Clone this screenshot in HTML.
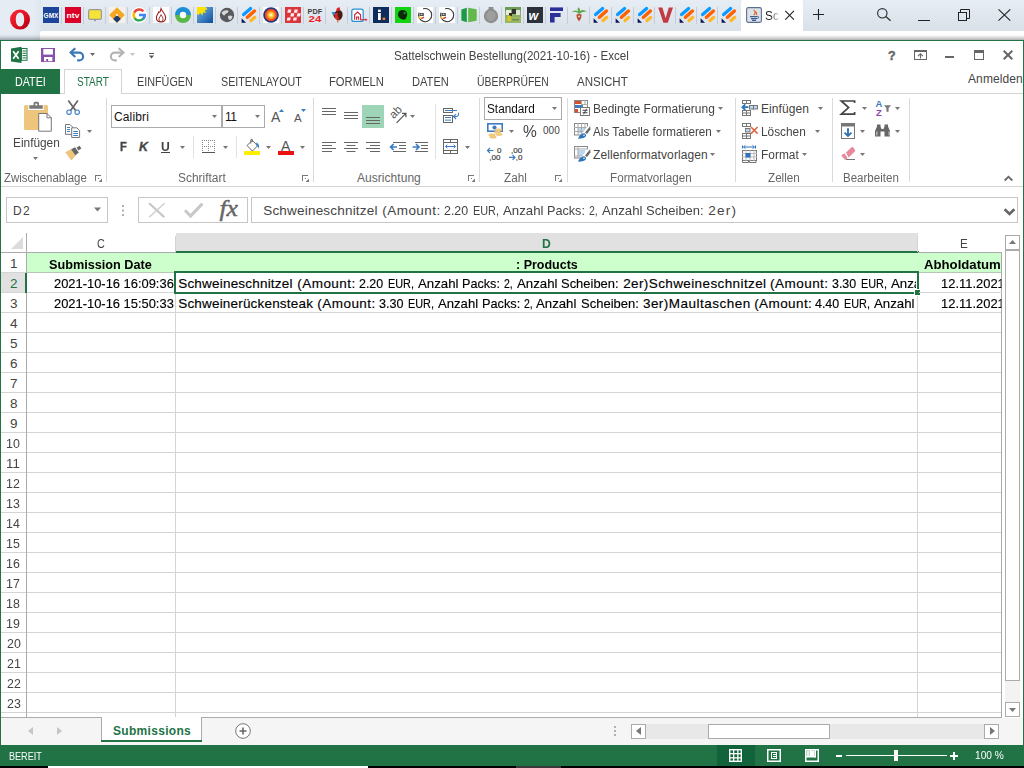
<!DOCTYPE html>
<html lang="de"><head><meta charset="utf-8"><title>Sattelschwein Bestellung(2021-10-16) - Excel</title>
<style>
html,body{margin:0;padding:0;background:#fff;}
body{width:1024px;height:768px;overflow:hidden;position:relative;font-family:"Liberation Sans",sans-serif;}
#r{position:absolute;left:0;top:0;width:1024px;height:768px;overflow:hidden;}
#r div,#r svg,#r span{position:absolute;box-sizing:content-box;}
#r span{white-space:pre;line-height:20px;font-family:"Liberation Sans",sans-serif;}
</style></head>
<body><div id="r">
<div style="left:0px;top:0px;width:1024px;height:31px;background:linear-gradient(#e6edf5,#d9e0e8);"></div>
<div style="left:0px;top:0px;width:41px;height:40px;background:linear-gradient(90deg,#e5ecf4 80%,#dfe6ee);"></div>
<div style="left:40px;top:31px;width:984px;height:9px;background:#fff;border-radius:3px 0 0 0;"></div>
<div style="left:0px;top:34px;width:1024px;height:6px;background:linear-gradient(rgba(0,0,0,0),rgba(0,0,0,0.04) 30%,rgba(0,0,0,0.30));"></div>
<div style="left:741px;top:0px;width:62px;height:32px;background:#fff;border-radius:2px 2px 0 0;"></div>
<div style="left:0px;top:40px;width:1024px;height:728px;background:#217346;"></div>
<div style="left:1px;top:41px;width:1022px;height:704px;background:#fff;"></div>
<span style="left:394px;top:46px;font-size:12px;color:#444;transform:scaleX(0.9671);transform-origin:0 0;">Sattelschwein Bestellung(2021-10-16) - Excel</span>
<div style="left:1px;top:69px;width:59px;height:25px;background:#217346;"></div>
<div style="left:60px;top:93px;width:963px;height:1px;background:#d4d4d4;"></div>
<div style="left:64px;top:69px;width:56px;height:24px;border:1px solid #d4d4d4;background:#fff;border-bottom:none;height:24px;"></div>
<div style="left:65px;top:93px;width:56px;height:1px;background:#fff;"></div>
<span style="left:15px;top:72px;font-size:12px;color:#fff;transform:scaleX(0.8940);transform-origin:0 0;">DATEI</span>
<span style="left:77px;top:72px;font-size:12px;color:#217346;transform:scaleX(0.8317);transform-origin:0 0;">START</span>
<span style="left:137px;top:72px;font-size:12px;color:#444;transform:scaleX(0.8998);transform-origin:0 0;">EINFÜGEN</span>
<span style="left:221px;top:72px;font-size:12px;color:#444;transform:scaleX(0.8931);transform-origin:0 0;">SEITENLAYOUT</span>
<span style="left:329px;top:72px;font-size:12px;color:#444;transform:scaleX(0.9340);transform-origin:0 0;">FORMELN</span>
<span style="left:412px;top:72px;font-size:12px;color:#444;transform:scaleX(0.9251);transform-origin:0 0;">DATEN</span>
<span style="left:477px;top:72px;font-size:12px;color:#444;transform:scaleX(0.8683);transform-origin:0 0;">ÜBERPRÜFEN</span>
<span style="left:577px;top:72px;font-size:12px;color:#444;transform:scaleX(0.9645);transform-origin:0 0;">ANSICHT</span>
<span style="left:968px;top:69px;font-size:12px;color:#444;letter-spacing:0.108px;">Anmelden</span>
<div style="left:1px;top:186px;width:1022px;height:1px;background:#d4d4d4;"></div>
<div style="left:106px;top:98px;width:1px;height:84px;background:#dadada;"></div>
<div style="left:313px;top:98px;width:1px;height:84px;background:#dadada;"></div>
<div style="left:479px;top:98px;width:1px;height:84px;background:#dadada;"></div>
<div style="left:567px;top:98px;width:1px;height:84px;background:#dadada;"></div>
<div style="left:735px;top:98px;width:1px;height:84px;background:#dadada;"></div>
<div style="left:832px;top:98px;width:1px;height:84px;background:#dadada;"></div>
<div style="left:909px;top:98px;width:1px;height:84px;background:#dadada;"></div>
<div style="left:435px;top:104px;width:1px;height:55px;background:#e1e1e1;"></div>
<div style="left:193px;top:136px;width:1px;height:22px;background:#e1e1e1;"></div>
<div style="left:236px;top:136px;width:1px;height:22px;background:#e1e1e1;"></div>
<span style="left:4px;top:168px;font-size:12px;color:#666;transform:scaleX(0.9548);transform-origin:0 0;">Zwischenablage</span>
<span style="left:178px;top:168px;font-size:12px;color:#666;transform:scaleX(0.9955);transform-origin:0 0;">Schriftart</span>
<span style="left:357px;top:168px;font-size:12px;color:#666;letter-spacing:0.042px;">Ausrichtung</span>
<span style="left:504px;top:168px;font-size:12px;color:#666;transform:scaleX(0.9767);transform-origin:0 0;">Zahl</span>
<span style="left:610px;top:168px;font-size:12px;color:#666;transform:scaleX(0.9733);transform-origin:0 0;">Formatvorlagen</span>
<span style="left:768px;top:168px;font-size:12px;color:#666;transform:scaleX(0.9728);transform-origin:0 0;">Zellen</span>
<span style="left:843px;top:168px;font-size:12px;color:#666;transform:scaleX(0.9613);transform-origin:0 0;">Bearbeiten</span>
<span style="left:12.5px;top:133px;font-size:12px;color:#444;transform:scaleX(0.9879);transform-origin:0 0;">Einfügen</span>
<div style="left:111px;top:105px;width:109px;height:21px;border:1px solid #ababab;background:#fff;"></div>
<div style="left:222px;top:105px;width:41px;height:21px;border:1px solid #ababab;background:#fff;"></div>
<span style="left:114px;top:107px;font-size:12px;color:#111;letter-spacing:0.131px;">Calibri</span>
<span style="left:225px;top:107px;font-size:12px;color:#111;letter-spacing:-0.6px;">11</span>
<span style="left:120px;top:137px;font-size:12.5px;color:#444;font-weight:700;transform:scaleX(0.8900);transform-origin:0 0;-webkit-text-stroke:0.35px #444;">F</span>
<span style="left:139px;top:137px;font-size:12.5px;color:#444;font-weight:700;font-style:italic;letter-spacing:0.769px;-webkit-text-stroke:0.3px #444;">K</span>
<span style="left:161px;top:137px;font-size:12.5px;color:#444;font-weight:700;transform:scaleX(0.9744);transform-origin:0 0;">U</span>
<div style="left:161px;top:152px;width:9px;height:1px;background:#444;"></div>
<div style="left:484px;top:97px;width:76px;height:21px;border:1px solid #ababab;background:#fff;"></div>
<span style="left:487px;top:99px;font-size:12px;color:#111;transform:scaleX(0.9815);transform-origin:0 0;">Standard</span>
<span style="left:523px;top:122px;font-size:16px;color:#444;transform:scaleX(0.9695);transform-origin:0 0;">%</span>
<span style="left:543px;top:121px;font-size:10px;color:#444;letter-spacing:0.056px;">000</span>
<span style="left:593px;top:99px;font-size:12px;color:#444;transform:scaleX(0.9977);transform-origin:0 0;">Bedingte Formatierung</span>
<span style="left:593px;top:122px;font-size:12px;color:#444;transform:scaleX(0.9750);transform-origin:0 0;">Als Tabelle formatieren</span>
<span style="left:593px;top:145px;font-size:12px;color:#444;letter-spacing:0.109px;">Zellenformatvorlagen</span>
<span style="left:761px;top:99px;font-size:12px;color:#444;letter-spacing:0.061px;">Einfügen</span>
<span style="left:761px;top:122px;font-size:12px;color:#444;transform:scaleX(0.9873);transform-origin:0 0;">Löschen</span>
<span style="left:761px;top:145px;font-size:12px;color:#444;transform:scaleX(0.9943);transform-origin:0 0;">Format</span>
<div style="left:362px;top:105px;width:22px;height:23px;background:#9fd5b7;"></div>
<div style="left:6px;top:197px;width:100px;height:24px;border:1px solid #c6c6c6;background:#fff;"></div>
<div style="left:138px;top:197px;width:108px;height:24px;border:1px solid #c6c6c6;background:#fff;"></div>
<div style="left:251px;top:197px;width:765px;height:24px;border:1px solid #c6c6c6;background:#fff;"></div>
<span style="left:13px;top:201px;font-size:12px;color:#444;letter-spacing:1.456px;">D2</span>
<span style="left:263.2px;top:201px;font-size:13.5px;color:#444;letter-spacing:0.202px;">Schweineschnitzel</span>
<span style="left:382.3px;top:201px;font-size:13.5px;color:#444;letter-spacing:0.446px;">(Amount:</span>
<span style="left:444.2px;top:201px;font-size:13.5px;color:#444;transform:scaleX(0.9208);transform-origin:0 0;">2.20</span>
<span style="left:472.8px;top:201px;font-size:13.5px;color:#444;transform:scaleX(0.8058);transform-origin:0 0;">EUR,</span>
<span style="left:502.9px;top:201px;font-size:13.5px;color:#444;transform:scaleX(0.9811);transform-origin:0 0;">Anzahl</span>
<span style="left:547.4px;top:201px;font-size:13.5px;color:#444;transform:scaleX(0.9354);transform-origin:0 0;">Packs:</span>
<span style="left:589px;top:201px;font-size:13.5px;color:#444;transform:scaleX(0.7811);transform-origin:0 0;">2,</span>
<span style="left:601.7px;top:201px;font-size:13.5px;color:#444;transform:scaleX(0.9811);transform-origin:0 0;">Anzahl</span>
<span style="left:646.2px;top:201px;font-size:13.5px;color:#444;transform:scaleX(0.9593);transform-origin:0 0;">Scheiben:</span>
<span style="left:708.2px;top:201px;font-size:13.5px;color:#444;letter-spacing:1.295px;">2er)</span>
<div style="left:176px;top:233px;width:742px;height:18px;background:#e1e1e1;"></div>
<div style="left:176px;top:251px;width:743px;height:2px;background:#217346;"></div>
<div style="left:1px;top:252px;width:175px;height:1px;background:#ababab;"></div>
<div style="left:918px;top:252px;width:84px;height:1px;background:#ababab;"></div>
<div style="left:27px;top:253px;width:975px;height:19px;background:#ccffcc;"></div>
<div style="left:1px;top:272px;width:25px;height:1px;background:#d4d4d4;"></div>
<div style="left:27px;top:272px;width:975px;height:1px;background:#d4d4d4;"></div>
<div style="left:1px;top:292px;width:25px;height:1px;background:#d4d4d4;"></div>
<div style="left:27px;top:292px;width:975px;height:1px;background:#d4d4d4;"></div>
<div style="left:1px;top:312px;width:25px;height:1px;background:#d4d4d4;"></div>
<div style="left:27px;top:312px;width:975px;height:1px;background:#d4d4d4;"></div>
<div style="left:1px;top:332px;width:25px;height:1px;background:#d4d4d4;"></div>
<div style="left:27px;top:332px;width:975px;height:1px;background:#d4d4d4;"></div>
<div style="left:1px;top:352px;width:25px;height:1px;background:#d4d4d4;"></div>
<div style="left:27px;top:352px;width:975px;height:1px;background:#d4d4d4;"></div>
<div style="left:1px;top:372px;width:25px;height:1px;background:#d4d4d4;"></div>
<div style="left:27px;top:372px;width:975px;height:1px;background:#d4d4d4;"></div>
<div style="left:1px;top:392px;width:25px;height:1px;background:#d4d4d4;"></div>
<div style="left:27px;top:392px;width:975px;height:1px;background:#d4d4d4;"></div>
<div style="left:1px;top:412px;width:25px;height:1px;background:#d4d4d4;"></div>
<div style="left:27px;top:412px;width:975px;height:1px;background:#d4d4d4;"></div>
<div style="left:1px;top:432px;width:25px;height:1px;background:#d4d4d4;"></div>
<div style="left:27px;top:432px;width:975px;height:1px;background:#d4d4d4;"></div>
<div style="left:1px;top:452px;width:25px;height:1px;background:#d4d4d4;"></div>
<div style="left:27px;top:452px;width:975px;height:1px;background:#d4d4d4;"></div>
<div style="left:1px;top:472px;width:25px;height:1px;background:#d4d4d4;"></div>
<div style="left:27px;top:472px;width:975px;height:1px;background:#d4d4d4;"></div>
<div style="left:1px;top:492px;width:25px;height:1px;background:#d4d4d4;"></div>
<div style="left:27px;top:492px;width:975px;height:1px;background:#d4d4d4;"></div>
<div style="left:1px;top:512px;width:25px;height:1px;background:#d4d4d4;"></div>
<div style="left:27px;top:512px;width:975px;height:1px;background:#d4d4d4;"></div>
<div style="left:1px;top:532px;width:25px;height:1px;background:#d4d4d4;"></div>
<div style="left:27px;top:532px;width:975px;height:1px;background:#d4d4d4;"></div>
<div style="left:1px;top:552px;width:25px;height:1px;background:#d4d4d4;"></div>
<div style="left:27px;top:552px;width:975px;height:1px;background:#d4d4d4;"></div>
<div style="left:1px;top:572px;width:25px;height:1px;background:#d4d4d4;"></div>
<div style="left:27px;top:572px;width:975px;height:1px;background:#d4d4d4;"></div>
<div style="left:1px;top:592px;width:25px;height:1px;background:#d4d4d4;"></div>
<div style="left:27px;top:592px;width:975px;height:1px;background:#d4d4d4;"></div>
<div style="left:1px;top:612px;width:25px;height:1px;background:#d4d4d4;"></div>
<div style="left:27px;top:612px;width:975px;height:1px;background:#d4d4d4;"></div>
<div style="left:1px;top:632px;width:25px;height:1px;background:#d4d4d4;"></div>
<div style="left:27px;top:632px;width:975px;height:1px;background:#d4d4d4;"></div>
<div style="left:1px;top:652px;width:25px;height:1px;background:#d4d4d4;"></div>
<div style="left:27px;top:652px;width:975px;height:1px;background:#d4d4d4;"></div>
<div style="left:1px;top:672px;width:25px;height:1px;background:#d4d4d4;"></div>
<div style="left:27px;top:672px;width:975px;height:1px;background:#d4d4d4;"></div>
<div style="left:1px;top:692px;width:25px;height:1px;background:#d4d4d4;"></div>
<div style="left:27px;top:692px;width:975px;height:1px;background:#d4d4d4;"></div>
<div style="left:1px;top:712px;width:25px;height:1px;background:#d4d4d4;"></div>
<div style="left:27px;top:712px;width:975px;height:1px;background:#d4d4d4;"></div>
<div style="left:27px;top:272px;width:975px;height:1px;background:#b4c8b4;"></div>
<div style="left:26px;top:233px;width:1px;height:484px;background:#ababab;"></div>
<div style="left:175px;top:273px;width:1px;height:444px;background:#d4d4d4;"></div>
<div style="left:917px;top:273px;width:1px;height:444px;background:#d4d4d4;"></div>
<div style="left:175px;top:236px;width:1px;height:16px;background:#d4d4d4;"></div>
<div style="left:917px;top:236px;width:1px;height:16px;background:#d4d4d4;"></div>
<div style="left:1001px;top:253px;width:1px;height:465px;background:#ababab;"></div>
<div style="left:1px;top:717px;width:1001px;height:1px;background:#ababab;"></div>
<div style="left:1px;top:273px;width:24px;height:19px;background:#e1e1e1;"></div>
<div style="left:25px;top:273px;width:2px;height:20px;background:#217346;"></div>
<svg style="left:11px;top:237px;" width="12" height="12" viewBox="0 0 12 12"><path d="M12 0V12H0Z" fill="#dcdcdc"/></svg>
<div style="left:174px;top:271px;width:741px;height:19px;border:2px solid #217346;"></div>
<div style="left:914px;top:289px;width:7px;height:7px;background:#fff;"></div>
<div style="left:915px;top:290px;width:5px;height:5px;background:#217346;"></div>
<div style="left:919px;top:292px;width:83px;height:1px;background:#d4d4d4;"></div>
<span style="left:97px;top:234px;font-size:13.5px;color:#444;transform:scaleX(0.8000);transform-origin:0 0;">C</span>
<span style="left:542px;top:234px;font-size:13.5px;color:#217346;font-weight:700;transform:scaleX(0.9026);transform-origin:0 0;">D</span>
<span style="left:960px;top:234px;font-size:13.5px;color:#444;transform:scaleX(0.8652);transform-origin:0 0;">E</span>
<span style="left:10px;top:254px;font-size:13.5px;color:#444;letter-spacing:0.284px;">1</span>
<span style="left:10px;top:274px;font-size:13.5px;color:#217346;letter-spacing:0.284px;">2</span>
<span style="left:10px;top:294px;font-size:13.5px;color:#444;letter-spacing:0.284px;">3</span>
<span style="left:10px;top:314px;font-size:13.5px;color:#444;letter-spacing:0.284px;">4</span>
<span style="left:10px;top:334px;font-size:13.5px;color:#444;letter-spacing:0.284px;">5</span>
<span style="left:10px;top:354px;font-size:13.5px;color:#444;letter-spacing:0.284px;">6</span>
<span style="left:10px;top:374px;font-size:13.5px;color:#444;letter-spacing:0.284px;">7</span>
<span style="left:10px;top:394px;font-size:13.5px;color:#444;letter-spacing:0.284px;">8</span>
<span style="left:10px;top:414px;font-size:13.5px;color:#444;letter-spacing:0.284px;">9</span>
<span style="left:6.3px;top:434px;font-size:13.5px;color:#444;transform:scaleX(0.9181);transform-origin:0 0;">10</span>
<span style="left:6.3px;top:454px;font-size:13.5px;color:#444;transform:scaleX(0.9846);transform-origin:0 0;">11</span>
<span style="left:6.3px;top:474px;font-size:13.5px;color:#444;transform:scaleX(0.9181);transform-origin:0 0;">12</span>
<span style="left:6.3px;top:494px;font-size:13.5px;color:#444;transform:scaleX(0.9181);transform-origin:0 0;">13</span>
<span style="left:6.3px;top:514px;font-size:13.5px;color:#444;transform:scaleX(0.9181);transform-origin:0 0;">14</span>
<span style="left:6.3px;top:534px;font-size:13.5px;color:#444;transform:scaleX(0.9181);transform-origin:0 0;">15</span>
<span style="left:6.3px;top:554px;font-size:13.5px;color:#444;transform:scaleX(0.9181);transform-origin:0 0;">16</span>
<span style="left:6.3px;top:574px;font-size:13.5px;color:#444;transform:scaleX(0.9181);transform-origin:0 0;">17</span>
<span style="left:6.3px;top:594px;font-size:13.5px;color:#444;transform:scaleX(0.9181);transform-origin:0 0;">18</span>
<span style="left:6.3px;top:614px;font-size:13.5px;color:#444;transform:scaleX(0.9181);transform-origin:0 0;">19</span>
<span style="left:6.8px;top:634px;font-size:13.5px;color:#444;transform:scaleX(0.9181);transform-origin:0 0;">20</span>
<span style="left:6.8px;top:654px;font-size:13.5px;color:#444;transform:scaleX(0.9181);transform-origin:0 0;">21</span>
<span style="left:6.8px;top:674px;font-size:13.5px;color:#444;transform:scaleX(0.9181);transform-origin:0 0;">22</span>
<span style="left:6.8px;top:694px;font-size:13.5px;color:#444;transform:scaleX(0.9181);transform-origin:0 0;">23</span>
<span style="left:49px;top:255px;font-size:13.5px;color:#000;font-weight:700;transform:scaleX(0.9385);transform-origin:0 0;">Submission Date</span>
<span style="left:516px;top:255px;font-size:13.5px;color:#000;font-weight:700;transform:scaleX(0.9256);transform-origin:0 0;">: Products</span>
<span style="left:924px;top:255px;font-size:13.5px;color:#000;font-weight:700;transform:scaleX(0.9752);transform-origin:0 0;">Abholdatum</span>
<span style="left:54px;top:274px;font-size:13.5px;color:#000;transform:scaleX(0.9557);transform-origin:0 0;-webkit-text-stroke:0.15px #000;">2021-10-16 16:09:36</span>
<span style="left:54px;top:294px;font-size:13.5px;color:#000;transform:scaleX(0.9557);transform-origin:0 0;-webkit-text-stroke:0.15px #000;">2021-10-16 15:50:33</span>
<div style="left:176px;top:273px;width:740px;height:19px;overflow:hidden;">
<span style="left:2.2px;top:1px;font-size:13.5px;color:#000;letter-spacing:0.202px;-webkit-text-stroke:0.15px #000;">Schweineschnitzel</span>
<span style="left:121.3px;top:1px;font-size:13.5px;color:#000;letter-spacing:0.446px;-webkit-text-stroke:0.15px #000;">(Amount:</span>
<span style="left:183.2px;top:1px;font-size:13.5px;color:#000;transform:scaleX(0.9208);transform-origin:0 0;-webkit-text-stroke:0.15px #000;">2.20</span>
<span style="left:211.8px;top:1px;font-size:13.5px;color:#000;transform:scaleX(0.8058);transform-origin:0 0;-webkit-text-stroke:0.15px #000;">EUR,</span>
<span style="left:241.9px;top:1px;font-size:13.5px;color:#000;transform:scaleX(0.9811);transform-origin:0 0;-webkit-text-stroke:0.15px #000;">Anzahl</span>
<span style="left:286.4px;top:1px;font-size:13.5px;color:#000;transform:scaleX(0.9354);transform-origin:0 0;-webkit-text-stroke:0.15px #000;">Packs:</span>
<span style="left:328px;top:1px;font-size:13.5px;color:#000;transform:scaleX(0.7811);transform-origin:0 0;-webkit-text-stroke:0.15px #000;">2,</span>
<span style="left:340.7px;top:1px;font-size:13.5px;color:#000;transform:scaleX(0.9811);transform-origin:0 0;-webkit-text-stroke:0.15px #000;">Anzahl</span>
<span style="left:385.2px;top:1px;font-size:13.5px;color:#000;transform:scaleX(0.9593);transform-origin:0 0;-webkit-text-stroke:0.15px #000;">Scheiben:</span>
<span style="left:447.2px;top:1px;font-size:13.5px;color:#000;letter-spacing:0.391px;-webkit-text-stroke:0.15px #000;">2er)Schweineschnitzel</span>
<span style="left:594.1px;top:1px;font-size:13.5px;color:#000;letter-spacing:0.460px;-webkit-text-stroke:0.15px #000;">(Amount:</span>
<span style="left:656.1px;top:1px;font-size:13.5px;color:#000;transform:scaleX(0.9208);transform-origin:0 0;-webkit-text-stroke:0.15px #000;">3.30</span>
<span style="left:684.7px;top:1px;font-size:13.5px;color:#000;transform:scaleX(0.8058);transform-origin:0 0;-webkit-text-stroke:0.15px #000;">EUR,</span>
<span style="left:714.7px;top:1px;font-size:13.5px;color:#000;transform:scaleX(0.9811);transform-origin:0 0;-webkit-text-stroke:0.15px #000;">Anzahl</span>
</div>
<div style="left:176px;top:293px;width:740px;height:19px;overflow:hidden;">
<span style="left:2.2px;top:1px;font-size:13.5px;color:#000;letter-spacing:0.187px;-webkit-text-stroke:0.15px #000;">Schweinerückensteak</span>
<span style="left:141.3px;top:1px;font-size:13.5px;color:#000;letter-spacing:0.460px;-webkit-text-stroke:0.15px #000;">(Amount:</span>
<span style="left:203px;top:1px;font-size:13.5px;color:#000;transform:scaleX(0.9322);transform-origin:0 0;-webkit-text-stroke:0.15px #000;">3.30</span>
<span style="left:231.5px;top:1px;font-size:13.5px;color:#000;transform:scaleX(0.8058);transform-origin:0 0;-webkit-text-stroke:0.15px #000;">EUR,</span>
<span style="left:261.9px;top:1px;font-size:13.5px;color:#000;transform:scaleX(0.9714);transform-origin:0 0;-webkit-text-stroke:0.15px #000;">Anzahl</span>
<span style="left:306px;top:1px;font-size:13.5px;color:#000;transform:scaleX(0.9453);transform-origin:0 0;-webkit-text-stroke:0.15px #000;">Packs:</span>
<span style="left:347.5px;top:1px;font-size:13.5px;color:#000;transform:scaleX(0.7811);transform-origin:0 0;-webkit-text-stroke:0.15px #000;">2,</span>
<span style="left:360.4px;top:1px;font-size:13.5px;color:#000;transform:scaleX(0.9787);transform-origin:0 0;-webkit-text-stroke:0.15px #000;">Anzahl</span>
<span style="left:404.9px;top:1px;font-size:13.5px;color:#000;transform:scaleX(0.9642);transform-origin:0 0;-webkit-text-stroke:0.15px #000;">Scheiben:</span>
<span style="left:466.9px;top:1px;font-size:13.5px;color:#000;letter-spacing:0.481px;-webkit-text-stroke:0.15px #000;">3er)Maultaschen</span>
<span style="left:578.2px;top:1px;font-size:13.5px;color:#000;letter-spacing:0.403px;-webkit-text-stroke:0.15px #000;">(Amount:</span>
<span style="left:639.4px;top:1px;font-size:13.5px;color:#000;transform:scaleX(0.9208);transform-origin:0 0;-webkit-text-stroke:0.15px #000;">4.40</span>
<span style="left:668px;top:1px;font-size:13.5px;color:#000;transform:scaleX(0.8058);transform-origin:0 0;-webkit-text-stroke:0.15px #000;">EUR,</span>
<span style="left:698px;top:1px;font-size:13.5px;color:#000;transform:scaleX(0.9811);transform-origin:0 0;-webkit-text-stroke:0.15px #000;">Anzahl</span>
</div>
<span style="left:941px;top:274px;font-size:13.5px;color:#000;transform:scaleX(0.9583);transform-origin:0 0;width:62.61px;overflow:hidden;-webkit-text-stroke:0.15px #000;">12.11.2021</span>
<span style="left:941px;top:294px;font-size:13.5px;color:#000;transform:scaleX(0.9583);transform-origin:0 0;width:62.61px;overflow:hidden;-webkit-text-stroke:0.15px #000;">12.11.2021</span>
<div style="left:1005px;top:250px;width:15px;height:452px;background:#f3f3f3;"></div>
<div style="left:1005px;top:235px;width:13px;height:13px;border:1px solid #ababab;background:#fff;"></div>
<div style="left:1005px;top:702px;width:13px;height:13px;border:1px solid #ababab;background:#fff;"></div>
<div style="left:1005px;top:250px;width:13px;height:429px;border:1px solid #ababab;background:#fff;"></div>
<svg style="left:1009px;top:240px;" width="7" height="4" viewBox="0 0 7 4"><path d="M0 4H7L3.5 0Z" fill="#777"/></svg>
<svg style="left:1009px;top:708px;" width="7" height="4" viewBox="0 0 7 4"><path d="M0 0H7L3.5 4Z" fill="#777"/></svg>
<div style="left:1px;top:718px;width:1022px;height:27px;background:#f5f5f5;"></div>
<div style="left:102px;top:717px;width:99px;height:23px;background:#fff;"></div>
<div style="left:101px;top:718px;width:1px;height:23px;background:#ababab;"></div>
<div style="left:201px;top:718px;width:1px;height:23px;background:#ababab;"></div>
<div style="left:101px;top:740px;width:101px;height:2px;background:#217346;"></div>
<span style="left:113px;top:721px;font-size:12px;color:#217346;font-weight:700;letter-spacing:0.311px;">Submissions</span>
<svg style="left:28px;top:727px;" width="5" height="8" viewBox="0 0 5 8"><path d="M5 0V8L0 4Z" fill="#c6c6c6"/></svg>
<svg style="left:57px;top:727px;" width="5" height="8" viewBox="0 0 5 8"><path d="M0 0V8L5 4Z" fill="#c6c6c6"/></svg>
<svg style="left:235px;top:723px;" width="16" height="16" viewBox="0 0 16 16"><circle cx="8" cy="8" r="7.3" fill="#fff" stroke="#777" stroke-width="1"/><path d="M4.5 8H11.5M8 4.5V11.5" stroke="#666" stroke-width="1.6"/></svg>
<div style="left:614px;top:726px;width:2px;height:2px;background:#b0b0b0;"></div>
<div style="left:614px;top:730px;width:2px;height:2px;background:#b0b0b0;"></div>
<div style="left:614px;top:734px;width:2px;height:2px;background:#b0b0b0;"></div>
<div style="left:646px;top:724px;width:338px;height:15px;background:#e8e8e8;"></div>
<div style="left:631px;top:724px;width:13px;height:13px;border:1px solid #ababab;background:#fff;"></div>
<div style="left:984px;top:724px;width:13px;height:13px;border:1px solid #ababab;background:#fff;"></div>
<div style="left:708px;top:724px;width:120px;height:13px;border:1px solid #ababab;background:#fff;"></div>
<svg style="left:636px;top:727px;" width="5" height="8" viewBox="0 0 5 8"><path d="M5 0V8L0 4Z" fill="#777"/></svg>
<svg style="left:990px;top:727px;" width="5" height="8" viewBox="0 0 5 8"><path d="M0 0V8L5 4Z" fill="#777"/></svg>
<div style="left:0px;top:745px;width:1024px;height:21px;background:#217346;"></div>
<span style="left:9px;top:746px;font-size:11px;color:#fff;transform:scaleX(0.8255);transform-origin:0 0;">BEREIT</span>
<span style="left:975px;top:745px;font-size:11px;color:#fff;transform:scaleX(0.9230);transform-origin:0 0;">100 %</span>
<div style="left:717px;top:745px;width:38px;height:21px;background:#10633a;"></div>
<div style="left:846px;top:755px;width:101px;height:1px;background:#fff;"></div>
<div style="left:894px;top:750px;width:4px;height:11px;background:#fff;"></div>
<div style="left:836px;top:755px;width:6px;height:2px;background:#fff;"></div>
<div style="left:950px;top:755px;width:8px;height:2px;background:#fff;"></div>
<div style="left:953px;top:752px;width:2px;height:8px;background:#fff;"></div>
<div style="left:0px;top:766px;width:1024px;height:2px;background:#000;"></div>
<div style="left:48px;top:766px;width:320px;height:2px;background:#fff;"></div>
<div style="left:516px;top:766px;width:45px;height:2px;background:#3a3a3a;"></div>
<span style="left:888px;top:46px;font-size:12.5px;color:#666;font-weight:700;letter-spacing:0.159px;-webkit-text-stroke:0.4px #666;">?</span>
<span style="left:271px;top:107px;font-size:14px;color:#555;letter-spacing:1.456px;">A</span>
<span style="left:294px;top:108px;font-size:11.5px;color:#555;letter-spacing:1.128px;">A</span>
<span style="left:281px;top:136px;font-size:14px;color:#555;letter-spacing:1.456px;">A</span>
<span style="left:765px;top:6px;font-size:13px;color:#222;transform:scaleX(0.9096);transform-origin:0 0;-webkit-mask-image:linear-gradient(90deg,#000 40%,rgba(0,0,0,0.15));">Sc</span>
<svg style="left:0;top:0" width="1024" height="768" viewBox="0 0 1024 768"><path d="M11 48.4L21.5 46.8V62.9L11 61.4Z" fill="#217346" />
<rect x="21.5" y="48.5" width="5.5" height="11.8" fill="#fff" stroke="#217346" stroke-width="1" />
<rect x="22.5" y="50.5" width="4" height="1" fill="#217346" />
<rect x="22.5" y="52.8" width="4" height="1" fill="#217346" />
<rect x="22.5" y="55.1" width="4" height="1" fill="#217346" />
<rect x="22.5" y="57.4" width="4" height="1" fill="#217346" />
<path d="M13.2 51.2L18.6 58.8M18.6 51.2L13.2 58.8" fill="none" stroke="#fff" stroke-width="1.7" />
<rect x="41" y="48" width="14" height="14" fill="#8652ad" />
<rect x="43.3" y="49" width="9.6" height="5.6" fill="#fff" />
<rect x="44" y="57" width="8.4" height="4.2" fill="#fff" />
<rect x="46.2" y="59" width="1.9" height="2.2" fill="#8652ad" />
<path d="M75.3 48.3L70.6 52.6L75.3 56.9" fill="none" stroke="#3a77b7" stroke-width="2.1" stroke-linejoin="miter"/>
<path d="M71.5 52.6H79.2A3.9 3.9 0 0 1 79.2 60.4H77.2" fill="none" stroke="#3a77b7" stroke-width="2.1" />
<path d="M90 53H95L92.5 56Z" fill="#666" />
<path d="M118.7 48.3L123.4 52.6L118.7 56.9" fill="none" stroke="#b3b3b3" stroke-width="2.1" />
<path d="M122.5 52.6H114.8A3.9 3.9 0 0 0 114.8 60.4H116.8" fill="none" stroke="#b3b3b3" stroke-width="2.1" />
<path d="M130 53H135L132.5 56Z" fill="#c4c4c4" />
<rect x="149" y="53" width="5" height="1" fill="#555" />
<path d="M149 55.5H154L151.5 58.5Z" fill="#555" />
<rect x="914.5" y="50.5" width="12" height="9" fill="none" stroke="#666" stroke-width="1" />
<rect x="914" y="50" width="13" height="2" fill="#666" />
<path d="M920.5 58.5V53.8M918 56.2L920.5 53.7L923 56.2" fill="none" stroke="#666" stroke-width="1.1" />
<rect x="945" y="56" width="9" height="2" fill="#666" />
<rect x="974.5" y="50.5" width="9" height="9" fill="none" stroke="#666" stroke-width="1" />
<rect x="974" y="50" width="10" height="3" fill="#666" />
<path d="M1003.7 50.7L1012.3 59.3M1012.3 50.7L1003.7 59.3" fill="none" stroke="#666" stroke-width="2" />
<rect x="24" y="105" width="24" height="25" rx="1.5" fill="#edc57c"/>
<rect x="28.3" y="104" width="15.4" height="6" fill="#fff" />
<path d="M29.3 108.8V105.3H33.6V103.3Q33.6 101.8 35 101.8H37.6Q39 101.8 39 103.3V105.3H42.8V108.8Z" fill="#777" />
<rect x="35.3" y="103.6" width="2" height="1.8" fill="#fff" />
<path d="M38.7 113.5H47L51.3 117.8V131.2H38.7Z" fill="#fff" stroke="#777" stroke-width="1" />
<path d="M47 113.5V117.8H51.3" fill="none" stroke="#777" stroke-width="1" />
<path d="M33 157H38L35.5 160Z" fill="#777" />
<path d="M68.3 100.4L75.6 110.4M77.9 100.4L70.6 110.4" fill="none" stroke="#666" stroke-width="1.7" />
<circle cx="69" cy="112.2" r="2.2" fill="#fff" stroke="#3f7fc1" stroke-width="1.1"/>
<circle cx="77.2" cy="112.2" r="2.2" fill="#fff" stroke="#3f7fc1" stroke-width="1.1"/>
<path d="M65.5 124.5H70L72.5 127V134.3H65.5Z" fill="#fff" stroke="#777" stroke-width="1" />
<path d="M71.7 127.8H76.8L79.6 130.6V137.5H71.7Z" fill="#fff" stroke="#777" stroke-width="1" />
<rect x="67" y="127" width="3" height="1" fill="#3c7cc0" />
<rect x="67" y="129" width="3" height="1" fill="#3c7cc0" />
<rect x="67" y="131" width="3" height="1" fill="#3c7cc0" />
<rect x="73.3" y="131" width="4.6" height="1" fill="#3c7cc0" />
<rect x="73.3" y="133" width="4.6" height="1" fill="#3c7cc0" />
<rect x="73.3" y="135" width="4.6" height="1" fill="#3c7cc0" />
<path d="M87 130H92L89.5 133Z" fill="#777" />
<path d="M65.2 152.2L72 148.7L76.3 155L71.3 160.6Z" fill="#edc57c" />
<path d="M71.2 149.3L75.5 146.9L79.2 152.3L75.3 155.3Z" fill="#666" />
<path d="M76.6 147.6L79.6 145.8L81.3 148.4L78.4 150.4Z" fill="#666" />
<path d="M75.2 146.6L79 152.4" fill="none" stroke="#fff" stroke-width="0.9" />
<path d="M212 115H217L214.5 118Z" fill="#777" />
<path d="M255 115H260L257.5 118Z" fill="#777" />
<path d="M279 112L281.5 109L284 112Z" fill="#3c7cc0" />
<path d="M301 109H306L303.5 112Z" fill="#3c7cc0" />
<path d="M180 146H185L182.5 149Z" fill="#777" />
<rect x="202" y="140" width="1" height="1" fill="#888" />
<rect x="204" y="140" width="1" height="1" fill="#888" />
<rect x="206" y="140" width="1" height="1" fill="#888" />
<rect x="208" y="140" width="1" height="1" fill="#888" />
<rect x="210" y="140" width="1" height="1" fill="#888" />
<rect x="212" y="140" width="1" height="1" fill="#888" />
<rect x="214" y="140" width="1" height="1" fill="#888" />
<rect x="202" y="146" width="1" height="1" fill="#888" />
<rect x="204" y="146" width="1" height="1" fill="#888" />
<rect x="206" y="146" width="1" height="1" fill="#888" />
<rect x="208" y="146" width="1" height="1" fill="#888" />
<rect x="210" y="146" width="1" height="1" fill="#888" />
<rect x="212" y="146" width="1" height="1" fill="#888" />
<rect x="214" y="146" width="1" height="1" fill="#888" />
<rect x="202" y="140" width="1" height="1" fill="#888" />
<rect x="202" y="142" width="1" height="1" fill="#888" />
<rect x="202" y="144" width="1" height="1" fill="#888" />
<rect x="202" y="146" width="1" height="1" fill="#888" />
<rect x="202" y="148" width="1" height="1" fill="#888" />
<rect x="202" y="150" width="1" height="1" fill="#888" />
<rect x="208" y="140" width="1" height="1" fill="#888" />
<rect x="208" y="142" width="1" height="1" fill="#888" />
<rect x="208" y="144" width="1" height="1" fill="#888" />
<rect x="208" y="146" width="1" height="1" fill="#888" />
<rect x="208" y="148" width="1" height="1" fill="#888" />
<rect x="208" y="150" width="1" height="1" fill="#888" />
<rect x="214" y="140" width="1" height="1" fill="#888" />
<rect x="214" y="142" width="1" height="1" fill="#888" />
<rect x="214" y="144" width="1" height="1" fill="#888" />
<rect x="214" y="146" width="1" height="1" fill="#888" />
<rect x="214" y="148" width="1" height="1" fill="#888" />
<rect x="214" y="150" width="1" height="1" fill="#888" />
<rect x="202" y="152" width="13" height="1" fill="#555" />
<path d="M223 146H228L225.5 149Z" fill="#777" />
<path d="M247 145.5L252.2 140.4L257.6 145.8L252.4 151Z" fill="#fff" stroke="#666" stroke-width="1" />
<path d="M250.8 143.5V140Q250.8 139.3 251.6 139.3Q252.4 139.3 252.4 140V142" fill="none" stroke="#666" stroke-width="1" />
<path d="M256.3 142.5Q259.8 143.5 259 149Q258.2 146.3 256.3 145.5Z" fill="#3c7cc0" />
<rect x="244" y="151" width="16" height="4" fill="#ffee00" />
<path d="M266 146H271L268.5 149Z" fill="#777" />
<rect x="278" y="151" width="16" height="4" fill="#ee1111" />
<path d="M300 146H305L302.5 149Z" fill="#777" />
<rect x="322" y="108" width="14" height="1" fill="#666" />
<rect x="322" y="111" width="14" height="1" fill="#666" />
<rect x="322" y="114" width="14" height="1" fill="#666" />
<rect x="344" y="112" width="14" height="1" fill="#666" />
<rect x="344" y="115" width="14" height="1" fill="#666" />
<rect x="344" y="118" width="14" height="1" fill="#666" />
<rect x="366" y="117" width="14" height="1" fill="#666" />
<rect x="366" y="120" width="14" height="1" fill="#666" />
<rect x="366" y="123" width="14" height="1" fill="#666" />
<rect x="322" y="142" width="14" height="1" fill="#666" />
<rect x="344.0" y="142" width="14" height="1" fill="#666" />
<rect x="366" y="142" width="14" height="1" fill="#666" />
<rect x="322" y="145" width="10" height="1" fill="#666" />
<rect x="346.5" y="145" width="9" height="1" fill="#666" />
<rect x="370" y="145" width="10" height="1" fill="#666" />
<rect x="322" y="148" width="14" height="1" fill="#666" />
<rect x="344.0" y="148" width="14" height="1" fill="#666" />
<rect x="366" y="148" width="14" height="1" fill="#666" />
<rect x="322" y="151" width="10" height="1" fill="#666" />
<rect x="346.5" y="151" width="9" height="1" fill="#666" />
<rect x="370" y="151" width="10" height="1" fill="#666" />
<text x="0" y="0" transform="translate(393.8,119.3) rotate(-45)" font-family="Liberation Sans, sans-serif" font-size="11.5" fill="#555">ab</text>
<path d="M396.6 122.8L405.8 113.4M402 113.3H405.9V117.2" fill="none" stroke="#555" stroke-width="1.2" />
<path d="M410 115H415L412.5 118Z" fill="#777" />
<rect x="393" y="142" width="13" height="1" fill="#666" />
<rect x="393" y="151" width="13" height="1" fill="#666" />
<rect x="399" y="145" width="7" height="1" fill="#666" />
<rect x="399" y="148" width="7" height="1" fill="#666" />
<path d="M397 147H390.6M393.6 144L390.6 147L393.6 150" fill="none" stroke="#3c7cc0" stroke-width="1.7" />
<rect x="415" y="142" width="13" height="1" fill="#666" />
<rect x="415" y="151" width="13" height="1" fill="#666" />
<rect x="421" y="145" width="7" height="1" fill="#666" />
<rect x="421" y="148" width="7" height="1" fill="#666" />
<path d="M412.6 147H419M416 144L419 147L416 150" fill="none" stroke="#3c7cc0" stroke-width="1.7" />
<rect x="443.5" y="108.5" width="9" height="4" fill="none" stroke="#666" stroke-width="1" />
<rect x="443.5" y="115.5" width="9" height="7" fill="none" stroke="#666" stroke-width="1" />
<rect x="445" y="110" width="12" height="1" fill="#3c7cc0" />
<rect x="445" y="117" width="6" height="1" fill="#3c7cc0" />
<rect x="445" y="119.6" width="6" height="1" fill="#3c7cc0" />
<path d="M458.6 112.6Q459.4 117.2 453.8 116.6M456 114.2L453.4 116.6L456 119" fill="none" stroke="#3c7cc0" stroke-width="1.1" />
<rect x="443.5" y="139.5" width="14" height="14" fill="none" stroke="#666" stroke-width="1" />
<rect x="443" y="142" width="15" height="1" fill="#666" />
<rect x="443" y="150" width="15" height="1" fill="#666" />
<rect x="450" y="139" width="1" height="4" fill="#666" />
<rect x="450" y="150" width="1" height="4" fill="#666" />
<path d="M445.6 146.5H455.4M447.3 144.7L445.5 146.5L447.3 148.3M453.7 144.7L455.5 146.5L453.7 148.3" fill="none" stroke="#3c7cc0" stroke-width="1" />
<path d="M465 146H470L467.5 149Z" fill="#777" />
<path d="M552 107H557L554.5 110Z" fill="#777" />
<rect x="487.8" y="123.8" width="14.4" height="7.4" fill="#fff" stroke="#3c7cc0" stroke-width="1.6" />
<circle cx="494.5" cy="127.5" r="2.1" fill="#3c7cc0"/>
<ellipse cx="498.5" cy="130" rx="3.6" ry="1.4" fill="#f0c87c"/>
<ellipse cx="497.5" cy="132.3" rx="3.6" ry="1.4" fill="#f0c87c"/>
<ellipse cx="499.0" cy="134.6" rx="3.6" ry="1.4" fill="#f0c87c"/>
<ellipse cx="492.0" cy="135" rx="3.6" ry="1.4" fill="#f0c87c"/>
<ellipse cx="493.0" cy="137.2" rx="3.6" ry="1.4" fill="#f0c87c"/>
<path d="M509 130H514L511.5 133Z" fill="#777" />
<text x="497" y="152.9" font-family="Liberation Sans, sans-serif" font-size="8" fill="#333" stroke="#333" stroke-width="0.15">0</text><text x="489.3" y="160.1" font-family="Liberation Sans, sans-serif" font-size="8" fill="#333" stroke="#333" stroke-width="0.15">,00</text>
<path d="M493.5 150.5H487.5M490 148L487.5 150.5L490 153" fill="none" stroke="#3c7cc0" stroke-width="1.2" />
<text x="511" y="152.9" font-family="Liberation Sans, sans-serif" font-size="8" fill="#333" stroke="#333" stroke-width="0.15">,00</text><text x="515.8" y="160.1" font-family="Liberation Sans, sans-serif" font-size="8" fill="#333" stroke="#333" stroke-width="0.15">,0</text>
<path d="M509 157.4H515M512.5 154.9L515 157.4L512.5 159.9" fill="none" stroke="#3c7cc0" stroke-width="1.2" />
<rect x="95" y="175" width="6" height="1" fill="#777" />
<rect x="95" y="175" width="1" height="6" fill="#777" />
<rect x="98" y="178" width="1" height="1" fill="#777" />
<path d="M102 178.6V182H98.6Z" fill="#777" />
<rect x="302" y="175" width="6" height="1" fill="#777" />
<rect x="302" y="175" width="1" height="6" fill="#777" />
<rect x="305" y="178" width="1" height="1" fill="#777" />
<path d="M309 178.6V182H305.6Z" fill="#777" />
<rect x="468" y="175" width="6" height="1" fill="#777" />
<rect x="468" y="175" width="1" height="6" fill="#777" />
<rect x="471" y="178" width="1" height="1" fill="#777" />
<path d="M475 178.6V182H471.6Z" fill="#777" />
<rect x="555" y="175" width="6" height="1" fill="#777" />
<rect x="555" y="175" width="1" height="6" fill="#777" />
<rect x="558" y="178" width="1" height="1" fill="#777" />
<path d="M562 178.6V182H558.6Z" fill="#777" />
<rect x="574.5" y="100.5" width="13" height="12" fill="#fff" stroke="#888" stroke-width="1" />
<rect x="581" y="100.5" width="1" height="4" fill="#aaa" />
<rect x="584.5" y="100.5" width="1" height="4" fill="#aaa" />
<rect x="581" y="104" width="7" height="1" fill="#aaa" />
<rect x="575" y="101" width="6" height="3" fill="#d8502a" />
<rect x="575" y="105" width="8" height="3" fill="#3c7cc0" />
<rect x="575" y="109" width="3" height="3.5" fill="#d8502a" />
<rect x="580.5" y="107.5" width="9" height="8" fill="#fff" stroke="#777" stroke-width="1" />
<path d="M582.5 110.3H587.5M582.5 112.7H587.5M586.6 108.7L583.6 114.3" fill="none" stroke="#444" stroke-width="1" />
<rect x="574.5" y="123.5" width="13" height="11.5" fill="#fff" stroke="#888" stroke-width="1" />
<rect x="578" y="127" width="7" height="6" fill="#bdd7ee" />
<rect x="577.5" y="123" width="1" height="12" fill="#aaa" />
<rect x="581" y="123" width="1" height="12" fill="#aaa" />
<rect x="584.5" y="123" width="1" height="12" fill="#aaa" />
<rect x="574" y="127" width="14" height="1" fill="#aaa" />
<rect x="574" y="131" width="14" height="1" fill="#aaa" />
<path d="M591 122L583 132L577 140H592Z" fill="#fff" />
<path d="M590.2 126.2L585 132.6L587 134L590.4 129.5Z" fill="#666" />
<path d="M578 138.8Q579.5 134 583.5 133.2Q586.6 133.6 586 136Q584.5 138.6 578 138.8Z" fill="#2f74b9" />
<circle cx="584" cy="135.2" r="0.8" fill="#fff"/>
<rect x="574.5" y="146.5" width="13" height="11.5" fill="#fff" stroke="#888" stroke-width="1" />
<rect x="578" y="150" width="7" height="6" fill="#bdd7ee" />
<rect x="577.5" y="146" width="1" height="12" fill="#aaa" />
<rect x="574" y="148.5" width="14" height="1" fill="#aaa" />
<rect x="574" y="155.5" width="14" height="1" fill="#aaa" />
<path d="M591 145L583 155L577 163H592Z" fill="#fff" />
<path d="M590.2 149.2L585 155.6L587 157L590.4 152.5Z" fill="#666" />
<path d="M578 161.8Q579.5 157 583.5 156.2Q586.6 156.6 586 159Q584.5 161.6 578 161.8Z" fill="#2f74b9" />
<circle cx="584" cy="158.2" r="0.8" fill="#fff"/>
<path d="M718 107H723L720.5 110Z" fill="#777" />
<path d="M716 130H721L718.5 133Z" fill="#777" />
<path d="M710 153H715L712.5 156Z" fill="#777" />
<rect x="742.5" y="100.5" width="8" height="3" fill="none" stroke="#777" stroke-width="1" />
<rect x="746" y="100" width="1" height="4" fill="#777" />
<rect x="742.5" y="110.5" width="8" height="5" fill="none" stroke="#777" stroke-width="1" />
<rect x="746" y="110" width="1" height="6" fill="#777" />
<rect x="742" y="112.5" width="9" height="1" fill="#777" />
<rect x="749.5" y="105.5" width="8" height="3.5" fill="#bdd7ee" stroke="#777" stroke-width="1" />
<rect x="753" y="105" width="1" height="4.5" fill="#777" />
<path d="M748.5 107.2H742.6M745.3 104.4L742.4 107.2L745.3 110" fill="none" stroke="#2f74b9" stroke-width="1.8" />
<rect x="742.5" y="123.5" width="8" height="3" fill="none" stroke="#777" stroke-width="1" />
<rect x="746" y="123" width="1" height="4" fill="#777" />
<rect x="742.5" y="133.5" width="8" height="5" fill="none" stroke="#777" stroke-width="1" />
<rect x="746" y="133" width="1" height="6" fill="#777" />
<rect x="742" y="135.5" width="9" height="1" fill="#777" />
<rect x="745.5" y="128.5" width="4.5" height="3.5" fill="#bdd7ee" stroke="#777" stroke-width="1" />
<path d="M751 127L757.6 133.6M757.6 127L751 133.6" fill="none" stroke="#e0623a" stroke-width="1.5" />
<path d="M742.5 145.5V148.5M755.5 145.5V148.5M743.5 147H754.5M745.5 145.3L743.6 147L745.5 148.7M752.5 145.3L754.4 147L752.5 148.7" fill="none" stroke="#2f74b9" stroke-width="1" />
<rect x="742.5" y="150.5" width="14" height="10" fill="#fff" stroke="#777" stroke-width="1" />
<rect x="745.5" y="150" width="1" height="11" fill="#bbb" />
<rect x="749.5" y="150" width="1" height="11" fill="#bbb" />
<rect x="753.5" y="150" width="1" height="11" fill="#bbb" />
<rect x="742" y="153" width="15" height="1" fill="#bbb" />
<rect x="742" y="156.5" width="15" height="1" fill="#bbb" />
<rect x="745.5" y="153" width="5" height="4.5" fill="#2f74b9" />
<path d="M742.5 161V162.5H748.5V161M749.5 161V162.5H756V161" fill="none" stroke="#777" stroke-width="1" />
<path d="M818 107H823L820.5 110Z" fill="#777" />
<path d="M815 130H820L817.5 133Z" fill="#777" />
<path d="M802 153H807L804.5 156Z" fill="#777" />
<path d="M854.6 103V101H841.3L848.6 107.6L841.3 114.1H854.6V112" fill="none" stroke="#444" stroke-width="1.7" stroke-linejoin="miter"/>
<path d="M862 107H867L864.5 110Z" fill="#777" />
<text x="875.6" y="107" font-family="Liberation Sans, sans-serif" font-size="9.5" font-weight="bold" fill="#3c7cc0">A</text>
<text x="876" y="116" font-family="Liberation Sans, sans-serif" font-size="9.5" font-weight="bold" fill="#8e44ad">Z</text>
<path d="M884 105.2H891L888.6 108V111.7H886.4V108Z" fill="#777" />
<path d="M895 107H900L897.5 110Z" fill="#777" />
<rect x="841.5" y="123.5" width="13" height="15" fill="#fff" stroke="#777" stroke-width="1" />
<rect x="841" y="123" width="14" height="3.5" fill="#777" />
<path d="M848 128.3V135.8M844.6 132.6L848 136L851.4 132.6" fill="none" stroke="#2f74b9" stroke-width="1.9" />
<path d="M860 130H865L862.5 133Z" fill="#777" />
<path d="M875 136.6V131L877 126.5V124.5H880.5V126.5L881.5 129H883.5L884.5 126.5V124.5H888V126.5L890 131V136.6H884.5V131.5H880.5V136.6Z" fill="#666" />
<rect x="876.4" y="131.5" width="1" height="4" fill="#ddd" />
<rect x="888.6" y="131.5" width="1" height="4" fill="#ddd" />
<path d="M895 130H900L897.5 133Z" fill="#777" />
<path d="M846 152.5L851.5 147.3Q852.5 146.6 853.4 147.5L855 150Q855.4 151 854.6 151.7L848.5 157.5Z" fill="#e8899b" />
<path d="M841.2 155.6L844.4 153.2L847.6 158L845.2 160Z" fill="#e8899b" />
<rect x="846" y="159" width="9" height="1" fill="#777" />
<path d="M860 153H865L862.5 156Z" fill="#777" />
<path d="M1004.7 180.5L1008.5 176.7L1012.3 180.5" fill="none" stroke="#666" stroke-width="1.8" />
<path d="M94 207.5H101L97.5 211.5Z" fill="#777" />
<rect x="122" y="205" width="2" height="2" fill="#b0b0b0" />
<rect x="122" y="209.5" width="2" height="2" fill="#b0b0b0" />
<rect x="122" y="214" width="2" height="2" fill="#b0b0b0" />
<path d="M149.2 203.2L164.3 217.3" fill="none" stroke="#c6c6c6" stroke-width="2.2" />
<path d="M164.6 203.2L149.2 217.3" fill="none" stroke="#cfcfcf" stroke-width="1.5" />
<path d="M185 210.2L190.6 216L202.4 203.6" fill="none" stroke="#c8c8c8" stroke-width="3" />
<text x="219.5" y="215.8" font-family="Liberation Serif, serif" font-size="24" font-style="italic" fill="#666" stroke="#666" stroke-width="0.5" textLength="18.5" lengthAdjust="spacingAndGlyphs">fx</text>
<path d="M1004.6 209.2L1009.5 214L1014.4 209.2" fill="none" stroke="#666" stroke-width="2.6" />
<rect x="729.7" y="749.7" width="11.6" height="11.6" fill="none" stroke="#fff" stroke-width="1.4" />
<rect x="733" y="749" width="1.3" height="13" fill="#fff" />
<rect x="737.2" y="749" width="1.3" height="13" fill="#fff" />
<rect x="729" y="753" width="13" height="1.3" fill="#fff" />
<rect x="729" y="757.2" width="13" height="1.3" fill="#fff" />
<rect x="767.75" y="749.75" width="12.5" height="11.5" fill="none" stroke="#fff" stroke-width="1.5" />
<rect x="771.5" y="752.5" width="5" height="6" fill="none" stroke="#fff" stroke-width="1" />
<rect x="773" y="754" width="3" height="1" fill="#fff" />
<rect x="773" y="756" width="3" height="1" fill="#fff" />
<rect x="805.75" y="749.75" width="12.5" height="11.5" fill="none" stroke="#fff" stroke-width="1.5" />
<rect x="806.5" y="750.5" width="3" height="5.5" fill="#e6f0ea" />
<rect x="811" y="750.5" width="3.5" height="5.5" fill="#fff" />
<rect x="809.5" y="749" width="1.5" height="8" fill="#fff" />
<rect x="806" y="756" width="9.5" height="1.5" fill="#fff" />
<rect x="814.5" y="749" width="1.5" height="8.5" fill="#fff" />
<defs><linearGradient id="og" x1="0" y1="0" x2="1" y2="1"><stop offset="0" stop-color="#ff2a3a"/><stop offset="0.55" stop-color="#e0101f"/><stop offset="1" stop-color="#a00013"/></linearGradient><linearGradient id="sky" x1="0" y1="0" x2="1" y2="1"><stop offset="0" stop-color="#7fb6e6"/><stop offset="1" stop-color="#0a4f9e"/></linearGradient><radialGradient id="tg"><stop offset="0" stop-color="#fff"/><stop offset="0.25" stop-color="#ffd23a"/><stop offset="0.6" stop-color="#f0601c"/><stop offset="0.8" stop-color="#d8281c"/><stop offset="0.82" stop-color="#1d3a8a"/><stop offset="1" stop-color="#1d3a8a"/></radialGradient></defs>
<path d="M20 9.6A10 10 0 1 0 20 29.6A10 10 0 1 0 20 9.6ZM20 12.6C22.7 12.6 24.2 15.6 24.2 19.6C24.2 23.6 22.7 26.6 20 26.6C17.3 26.6 15.8 23.6 15.8 19.6C15.8 15.6 17.3 12.6 20 12.6Z" fill="url(#og)" fill-rule="evenodd"/>
<rect x="61" y="7" width="1" height="17" fill="#c5cdd8" />
<rect x="83" y="7" width="1" height="17" fill="#c5cdd8" />
<rect x="105" y="7" width="1" height="17" fill="#c5cdd8" />
<rect x="127" y="7" width="1" height="17" fill="#c5cdd8" />
<rect x="149" y="7" width="1" height="17" fill="#c5cdd8" />
<rect x="171" y="7" width="1" height="17" fill="#c5cdd8" />
<rect x="193" y="7" width="1" height="17" fill="#c5cdd8" />
<rect x="215" y="7" width="1" height="17" fill="#c5cdd8" />
<rect x="237" y="7" width="1" height="17" fill="#c5cdd8" />
<rect x="259" y="7" width="1" height="17" fill="#c5cdd8" />
<rect x="281" y="7" width="1" height="17" fill="#c5cdd8" />
<rect x="303" y="7" width="1" height="17" fill="#c5cdd8" />
<rect x="325" y="7" width="1" height="17" fill="#c5cdd8" />
<rect x="347" y="7" width="1" height="17" fill="#c5cdd8" />
<rect x="369" y="7" width="1" height="17" fill="#c5cdd8" />
<rect x="391" y="7" width="1" height="17" fill="#c5cdd8" />
<rect x="413" y="7" width="1" height="17" fill="#c5cdd8" />
<rect x="435" y="7" width="1" height="17" fill="#c5cdd8" />
<rect x="457" y="7" width="1" height="17" fill="#c5cdd8" />
<rect x="479" y="7" width="1" height="17" fill="#c5cdd8" />
<rect x="501" y="7" width="1" height="17" fill="#c5cdd8" />
<rect x="523" y="7" width="1" height="17" fill="#c5cdd8" />
<rect x="545" y="7" width="1" height="17" fill="#c5cdd8" />
<rect x="567" y="7" width="1" height="17" fill="#c5cdd8" />
<rect x="589" y="7" width="1" height="17" fill="#c5cdd8" />
<rect x="611" y="7" width="1" height="17" fill="#c5cdd8" />
<rect x="633" y="7" width="1" height="17" fill="#c5cdd8" />
<rect x="654" y="7" width="1" height="17" fill="#c5cdd8" />
<rect x="675" y="7" width="1" height="17" fill="#c5cdd8" />
<rect x="696" y="7" width="1" height="17" fill="#c5cdd8" />
<rect x="717" y="7" width="1" height="17" fill="#c5cdd8" />
<rect x="43" y="7" width="16" height="16" fill="#1c449b" />
<text x="43.6" y="17.6" font-family="Liberation Sans, sans-serif" font-size="6.3" font-weight="bold" fill="#fff" textLength="14.8" lengthAdjust="spacingAndGlyphs">GMX</text>
<rect x="65" y="7" width="16" height="16" fill="#dc0028" />
<text x="66.6" y="18" font-family="Liberation Sans, sans-serif" font-size="8" font-weight="bold" fill="#fff" textLength="12.8" lengthAdjust="spacingAndGlyphs">ntv</text>
<rect x="88.6" y="9.6" width="12.8" height="9.8" rx="1.6" fill="#f5e33a" stroke="#9a9a9a" stroke-width="1.2"/>
<rect x="94" y="20" width="2" height="1.2" fill="#9a9a9a" />
<rect x="109" y="7" width="16" height="16" fill="#f4f1ea" />
<path d="M117 7.2L124.8 15L117 22.8L109.2 15Z" fill="#f5a623" />
<path d="M117 15L120.8 18.9L117 22.8L113.2 18.9Z" fill="#1f3a6e" />
<circle cx="117" cy="15" r="1" fill="#fff"/>
<circle cx="139" cy="15" r="8" fill="#fff"/>
<path d="M144.6 15A5.6 5.6 0 0 1 134.4 18" fill="none" stroke="#34a853" stroke-width="2.4" />
<path d="M134.6 18.2A5.6 5.6 0 0 1 134.4 12.2" fill="none" stroke="#fbbc05" stroke-width="2.4" />
<path d="M134.3 12.4A5.6 5.6 0 0 1 143.4 11.3" fill="none" stroke="#ea4335" stroke-width="2.4" />
<path d="M139 15H144.8A5.6 5.6 0 0 1 143 19.2" fill="none" stroke="#4285f4" stroke-width="2.4" />
<rect x="153" y="7" width="16" height="16" fill="#fff" />
<path d="M161 8.6C162 11.5 165.6 13.6 165.6 17.6C165.6 20.4 163.6 22 161 22C158.4 22 156.4 20.4 156.4 17.6C156.4 15 158.2 14 158.8 12C160 13 160.4 11 161 8.6Z" fill="none" stroke="#9c2323" stroke-width="1.1" />
<path d="M161 14.6C162 16.6 163 17.4 163 19.2C163 20.6 162.2 21.6 161 21.6C159.8 21.6 159 20.6 159 19.2C159 17.4 160.4 16.8 161 14.6Z" fill="none" stroke="#9c2323" stroke-width="0.9" />
<path d="M175 15A8 8 0 0 1 191 15Z" fill="#1e8fd0" />
<path d="M175 15A8 8 0 0 0 191 15Z" fill="#58b947" />
<circle cx="183" cy="15" r="3.2" fill="#fff"/>
<rect x="197" y="7" width="16" height="16" fill="url(#sky)" />
<path d="M197 7H205.5L207.5 9.3L204.7 10.2L206.2 13L203 12.3L202.6 15.4L200.3 13L198.3 15L197 14Z" fill="#ffe100" />
<circle cx="227" cy="15" r="7.2" fill="#58595b"/>
<path d="M221.5 12.5Q224 9.8 227.5 10.3Q229.5 11.5 227.3 13Q225 13.6 224.5 15.5Q222.8 15.6 221.5 12.5ZM228 16Q231 14.8 232.6 16.6Q232 19.6 229.6 20.3Q227.5 18.8 228 16Z" fill="#d6d7d8" />
<path d="M243.6 14.6L250.6 8.6" fill="none" stroke="#0a9bff" stroke-width="3.3" stroke-linecap="round"/>
<path d="M247.4 17.3L254.4 11" fill="none" stroke="#ff6100" stroke-width="3.4" stroke-linecap="round"/>
<path d="M251 20.6L254.6 17.4" fill="none" stroke="#ffb629" stroke-width="3.3" stroke-linecap="round"/>
<path d="M241.6 18.2V22.8H246Z" fill="#0a1551" />
<rect x="263" y="7" width="16" height="16" fill="#fff" />
<circle cx="271" cy="15" r="7.8" fill="url(#tg)"/>
<rect x="285" y="7" width="16" height="16" fill="#d8353d" />
<path d="M288 9.5h3.4l-.7 3.2h-3.4Z" fill="#fbeaea" />
<path d="M294.5 9.5h3.4l-.7 3.2h-3.4Z" fill="#fbeaea" />
<path d="M291 13.3h3.4l-.7 3.2h-3.4Z" fill="#fbeaea" />
<path d="M297.4 13.3h3.4l-.7 3.2h-3.4Z" fill="#fbeaea" />
<path d="M287.4 17.4h3.4l-.7 3.2h-3.4Z" fill="#fbeaea" />
<path d="M293.6 17.4h3.4l-.7 3.2h-3.4Z" fill="#fbeaea" />
<text x="307.6" y="14.4" font-family="Liberation Sans, sans-serif" font-size="7.4" font-weight="bold" fill="#3c3c3c" textLength="14.6" lengthAdjust="spacingAndGlyphs">PDF</text>
<text x="308.6" y="22.4" font-family="Liberation Sans, sans-serif" font-size="8.6" font-weight="bold" fill="#ee1c24" textLength="12.6" lengthAdjust="spacingAndGlyphs">24</text>
<path d="M336.8 10.5Q340.5 9 342.3 12.5Q343.4 17 340 20Q337.6 21 336 19Q333 17 333.2 13.6Q334.6 13 336.8 10.5Z" fill="#4a1c16" />
<path d="M336 10.8Q336.6 7.6 339.4 7.2Q340.8 9.2 339.6 11Z" fill="#e02020" />
<path d="M334 13.6Q335.5 15 334.6 18Q337 20.4 339.4 19.6Q337 16 337.6 12.4Z" fill="#d92a20" />
<path d="M331.6 12H335V14.6H332.6Z" fill="#2a8fe0" />
<rect x="337" y="20" width="1.4" height="2.4" fill="#e07030" />
<rect x="351.8" y="9.2" width="11.4" height="12.2" rx="2" fill="#fff" stroke="#2a8fd0" stroke-width="1.2"/>
<path d="M354.6 19.8V14.8L357.6 12L360.6 14.8V19.8H366.6M356.6 19.8V17H358.6V19.8" fill="none" stroke="#cf2338" stroke-width="1.1" />
<path d="M365.6 18.3L367.4 19.8L365.6 21.3Z" fill="#cf2338" />
<rect x="373" y="7" width="16" height="16" fill="#0f2d5c" />
<rect x="378" y="13" width="2.8" height="7" fill="#fff" />
<rect x="378" y="9.6" width="2.8" height="2.4" fill="#fff" />
<rect x="382.6" y="17.6" width="2.6" height="2.4" fill="#f58220" />
<rect x="395" y="7" width="16" height="16" fill="#12d212" />
<circle cx="402.6" cy="14.6" r="4.6" fill="#0a2a0a"/>
<path d="M401 18Q404 20 406 17.6" fill="none" stroke="#0a2a0a" stroke-width="1.4" />
<circle cx="404.6" cy="13" r="1.2" fill="#2d7a2d"/>
<rect x="417" y="7" width="16" height="16" fill="#fff" />
<path d="M423.1 8.8A6.6 6.6 0 1 1 419 12.6" fill="none" stroke="#3a3a3a" stroke-width="1.1" />
<rect x="419.6" y="13" width="4.2" height="3" fill="#4a4a4a" />
<rect x="420.8" y="13.8" width="1.6" height="1.2" fill="#ddd" />
<path d="M418.6 16.4Q419.6 18.6 422 18.2" fill="none" stroke="#f3d13a" stroke-width="1.5" />
<path d="M421.4 18.6L424 17.2" fill="none" stroke="#e0323a" stroke-width="1.4" />
<rect x="439" y="7" width="16" height="16" fill="#fff" />
<path d="M445.1 8.8A6.6 6.6 0 1 1 441 12.6" fill="none" stroke="#3a3a3a" stroke-width="1.1" />
<rect x="441.6" y="13" width="4.2" height="3" fill="#4a4a4a" />
<rect x="442.8" y="13.8" width="1.6" height="1.2" fill="#ddd" />
<path d="M440.6 16.4Q441.6 18.6 444 18.2" fill="none" stroke="#f3d13a" stroke-width="1.5" />
<path d="M443.4 18.6L446 17.2" fill="none" stroke="#e0323a" stroke-width="1.4" />
<path d="M461.4 9.6L466.8 7.8V22.2L461.4 20.4Z" fill="#1d9a46" />
<path d="M468.2 7.8L476.6 9.2Q477 15 476.6 20.8L468.2 22.2Z" fill="#62b84a" />
<circle cx="491" cy="16" r="7.2" fill="#8d8d8d"/>
<rect x="488.6" y="7" width="4.8" height="2.4" fill="#8d8d8d" />
<rect x="488" y="11.6" width="6" height="0.8" fill="#b8b8b8" />
<rect x="486.6" y="13.6" width="8.8" height="0.8" fill="#b8b8b8" />
<rect x="486.4" y="15.6" width="9.2" height="0.8" fill="#b8b8b8" />
<rect x="486.8" y="17.6" width="8.4" height="0.8" fill="#b8b8b8" />
<rect x="488.4" y="19.6" width="5.2" height="0.8" fill="#b8b8b8" />
<rect x="505" y="7" width="16" height="16" fill="#8fae62" />
<rect x="505" y="7" width="16" height="4" fill="#6f9a58" />
<rect x="506" y="10" width="5" height="5" fill="#e8ece0" />
<rect x="512" y="9" width="4" height="5" fill="#30332c" />
<rect x="516" y="10" width="4" height="5" fill="#dfe6d8" />
<rect x="509" y="13" width="3" height="3" fill="#2b2e28" />
<rect x="505" y="17" width="16" height="6" fill="#98b765" />
<rect x="507.5" y="15.5" width="3.2" height="5.5" fill="#e0c81c" />
<rect x="512" y="19" width="7" height="1.4" fill="#6f8a4a" />
<rect x="527" y="7" width="16" height="16" fill="#2b303a" />
<text x="528.6" y="19.6" font-family="Liberation Sans, sans-serif" font-size="12.5" font-weight="bold" font-style="italic" fill="#fff">w</text>
<rect x="550" y="7.4" width="13" height="3.6" fill="#2d2f9a" />
<path d="M550 13H560.6V17H554.6V22.6H550Z" fill="#2d2f9a" />
<path d="M579 14Q576 10.6 571.6 12.4Q574.6 9.4 578 11.4Q577 8.6 578.4 7.2Q580.6 8.6 580 11.2Q583 8.8 586.8 11.6Q582.6 11.4 579 14Z" fill="#5aa848" />
<path d="M576.4 14.6Q579 13.4 581.6 14.6Q581.8 18.4 579 21.4Q576.2 18.4 576.4 14.6Z" fill="#b5472b" />
<circle cx="579" cy="16.6" r="1" fill="#f3d9b0"/>
<path d="M595.6 14.6L602.6 8.6" fill="none" stroke="#0a9bff" stroke-width="3.3" stroke-linecap="round"/>
<path d="M599.4 17.3L606.4 11" fill="none" stroke="#ff6100" stroke-width="3.4" stroke-linecap="round"/>
<path d="M603 20.6L606.6 17.4" fill="none" stroke="#ffb629" stroke-width="3.3" stroke-linecap="round"/>
<path d="M593.6 18.2V22.8H598Z" fill="#0a1551" />
<path d="M617.6 14.6L624.6 8.6" fill="none" stroke="#0a9bff" stroke-width="3.3" stroke-linecap="round"/>
<path d="M621.4 17.3L628.4 11" fill="none" stroke="#ff6100" stroke-width="3.4" stroke-linecap="round"/>
<path d="M625 20.6L628.6 17.4" fill="none" stroke="#ffb629" stroke-width="3.3" stroke-linecap="round"/>
<path d="M615.6 18.2V22.8H620Z" fill="#0a1551" />
<path d="M639.6 14.6L646.6 8.6" fill="none" stroke="#0a9bff" stroke-width="3.3" stroke-linecap="round"/>
<path d="M643.4 17.3L650.4 11" fill="none" stroke="#ff6100" stroke-width="3.4" stroke-linecap="round"/>
<path d="M647 20.6L650.6 17.4" fill="none" stroke="#ffb629" stroke-width="3.3" stroke-linecap="round"/>
<path d="M637.6 18.2V22.8H642Z" fill="#0a1551" />
<path d="M681.6 14.6L688.6 8.6" fill="none" stroke="#0a9bff" stroke-width="3.3" stroke-linecap="round"/>
<path d="M685.4 17.3L692.4 11" fill="none" stroke="#ff6100" stroke-width="3.4" stroke-linecap="round"/>
<path d="M689 20.6L692.6 17.4" fill="none" stroke="#ffb629" stroke-width="3.3" stroke-linecap="round"/>
<path d="M679.6 18.2V22.8H684Z" fill="#0a1551" />
<path d="M702.6 14.6L709.6 8.6" fill="none" stroke="#0a9bff" stroke-width="3.3" stroke-linecap="round"/>
<path d="M706.4 17.3L713.4 11" fill="none" stroke="#ff6100" stroke-width="3.4" stroke-linecap="round"/>
<path d="M710 20.6L713.6 17.4" fill="none" stroke="#ffb629" stroke-width="3.3" stroke-linecap="round"/>
<path d="M700.6 18.2V22.8H705Z" fill="#0a1551" />
<path d="M723.6 14.6L730.6 8.6" fill="none" stroke="#0a9bff" stroke-width="3.3" stroke-linecap="round"/>
<path d="M727.4 17.3L734.4 11" fill="none" stroke="#ff6100" stroke-width="3.4" stroke-linecap="round"/>
<path d="M731 20.6L734.6 17.4" fill="none" stroke="#ffb629" stroke-width="3.3" stroke-linecap="round"/>
<path d="M721.6 18.2V22.8H726Z" fill="#0a1551" />
<path d="M658.2 7.4H662.4L665.6 18.2L668.8 7.4H673L667.8 22.8H663.4Z" fill="#c23a42" />
<rect x="746.6" y="7.6" width="14.8" height="14.8" rx="1.6" fill="#dde2ea" stroke="#5a6f90" stroke-width="1.1"/>
<path d="M753.6 10Q756.6 12 753.8 15.2M755.6 11.6Q757.4 13 756 15" fill="none" stroke="#e0662a" stroke-width="1.2" />
<path d="M750 16.6H757.6M751 18.6H757M752 20.4H756" fill="none" stroke="#3f5f8f" stroke-width="1.1" />
<path d="M757.6 16.2Q760 17 757.6 18.8" fill="none" stroke="#3f5f8f" stroke-width="1" />
<path d="M785.3 10.8L793.9 19.6M793.9 10.8L785.3 19.6" fill="none" stroke="#222" stroke-width="1.1" />
<path d="M813 14.5H824M818.5 9V20" fill="none" stroke="#222" stroke-width="1.1" />
<circle cx="882.3" cy="13.3" r="4.7" fill="none" stroke="#333" stroke-width="1.2"/>
<path d="M885.8 16.6L890.6 20.8" fill="none" stroke="#333" stroke-width="1.3" />
<rect x="918" y="20" width="12" height="1" fill="#222" />
<rect x="958.5" y="12.5" width="8" height="8" fill="none" stroke="#222" stroke-width="1" />
<path d="M960.5 12V9.5H969.5V18.5H967" fill="none" stroke="#222" stroke-width="1" />
<path d="M998.5 9.3L1010.3 20.7M1010.3 9.3L998.5 20.7" fill="none" stroke="#222" stroke-width="1.1" /></svg>
</div></body></html>
